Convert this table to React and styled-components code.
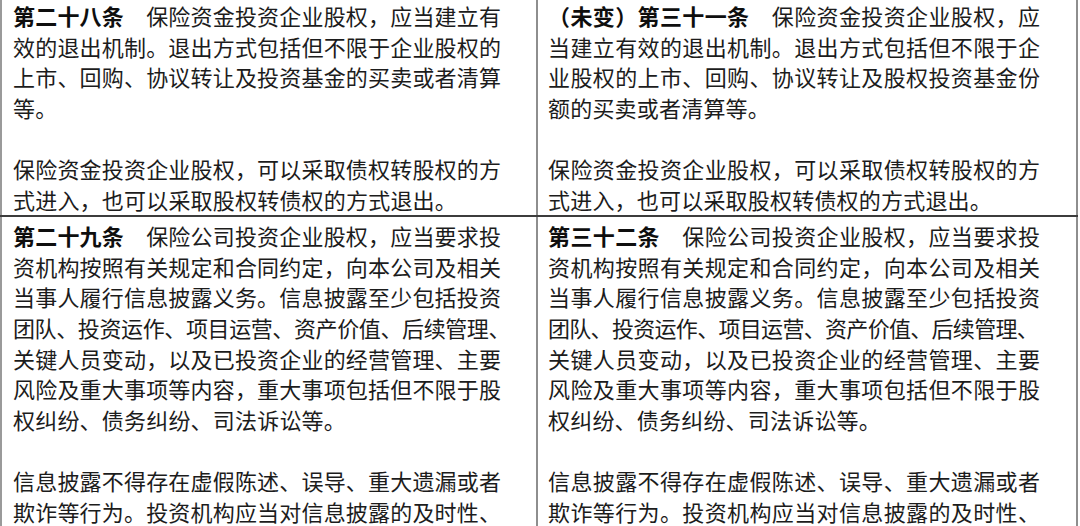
import React from 'react'
import styled, {createGlobalStyle} from "styled-components"

const Global = createGlobalStyle`
html, body {
    margin: 0;
    padding: 0;
    background: #ffffff;
}
body {
    width: 1080px;
    height: 526px;
    overflow: hidden;
    font-family: "Noto Sans CJK SC", "Liberation Serif", serif;
    color: #1c1c1c;
}
`

const rowTwo = (lead) => [
    {lead, t: "　保险公司投资企业股权，应当要求投", full: true},
    {t: "资机构按照有关规定和合同约定，向本公司及相关", full: true},
    {t: "当事人履行信息披露义务。信息披露至少包括投资", full: true},
    {t: "团队、投资运作、项目运营、资产价值、后续管理、", full: true, tight: true},
    {t: "关键人员变动，以及已投资企业的经营管理、主要", full: true},
    {t: "风险及重大事项等内容，重大事项包括但不限于股", full: true},
    {t: "权纠纷、债务纠纷、司法诉讼等。"},
    {t: ""},
    {t: "信息披露不得存在虚假陈述、误导、重大遗漏或者", full: true},
    {t: "欺诈等行为。投资机构应当对信息披露的及时性、", full: true},
]

const rows = [
    {
        top: 0,
        bottom: 1,
        left: [
            {lead: "第二十八条", t: "　保险资金投资企业股权，应当建立有", full: true},
            {t: "效的退出机制。退出方式包括但不限于企业股权的", full: true},
            {t: "上市、回购、协议转让及投资基金的买卖或者清算", full: true},
            {t: "等。"},
            {t: ""},
            {t: "保险资金投资企业股权，可以采取债权转股权的方", full: true},
            {t: "式进入，也可以采取股权转债权的方式退出。"},
        ],
        right: [
            {lead: "（未变）第三十一条", t: "　保险资金投资企业股权，应", full: true},
            {t: "当建立有效的退出机制。退出方式包括但不限于企", full: true},
            {t: "业股权的上市、回购、协议转让及股权投资基金份", full: true},
            {t: "额的买卖或者清算等。"},
            {t: ""},
            {t: "保险资金投资企业股权，可以采取债权转股权的方", full: true},
            {t: "式进入，也可以采取股权转债权的方式退出。"},
        ],
    },
    {
        top: 3,
        bottom: 0,
        left: rowTwo("第二十九条"),
        right: rowTwo("第三十二条"),
    },
]

const Cell = ({lines, side}) => (
    <Column $side={side}>
        {lines.map((l, i) => (
            <Line key={i} $full={l.full} $tight={l.tight}>
                {l.lead && <Lead>{l.lead}</Lead>}
                {l.t || "\u00a0"}
            </Line>
        ))}
    </Column>
)

const App = () => {
    return (
        <>
            <Global/>
            <Table>
                {rows.map((r, i) => (
                    <Row key={i} $top={r.top} $bottom={r.bottom}>
                        <Cell lines={r.left} side="left"/>
                        <Cell lines={r.right} side="right"/>
                    </Row>
                ))}
            </Table>
        </>
    )
}

export default App

const Table = styled.div`
width: 1078px;
display: flex;
flex-direction: column;
`

const Row = styled.div`
display: grid;
grid-template-columns: 538px 540px;
border-bottom: 2px solid #3c3c3c;
& > div {
    padding-top: ${({$top}) => $top}px;
    padding-bottom: ${({$bottom}) => $bottom}px;
}
`

const Column = styled.div`
--span: ${({$side}) => $side === "left" ? "488px" : "492px"};
--spill: ${({$side}) => $side === "left" ? "9px" : "-2px"};
--squeeze: ${({$side}) => $side === "left" ? "-0.5px" : "-0.8px"};
padding-left: ${({$side}) => $side === "left" ? "11px" : "10px"};
border-left: ${({$side}) => $side === "left" ? "2px solid #9a9a9a" : "none"};
border-right: 2px solid #8e8e8e;
font-size: 22px;
line-height: 30.6px;
letter-spacing: 0;
`

const Line = styled.div`
width: ${({$tight}) => $tight ? "calc(var(--span) + var(--spill))" : "var(--span)"};
height: 30.6px;
text-align: ${({$full}) => $full ? "justify" : "left"};
text-align-last: ${({$full}) => $full ? "justify" : "left"};
letter-spacing: ${({$tight, $full}) => $tight ? "var(--squeeze)" : $full ? "0" : "0.2px"};
`

const Lead = styled.b`
font-weight: 700;
color: #0e0e0e;
`
